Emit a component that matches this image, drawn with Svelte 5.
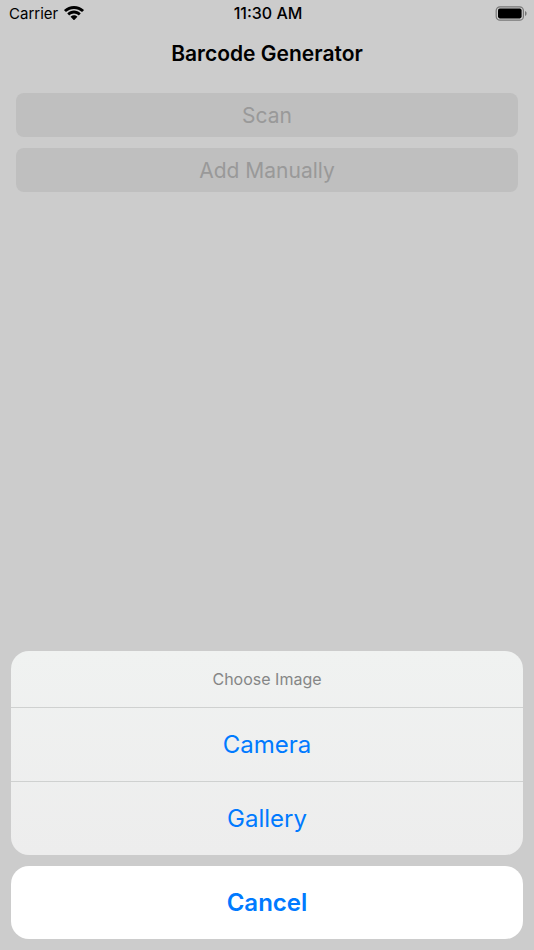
<script lang="ts">
  const pageActions = ['Scan', 'Add Manually'];
  const sources = ['Camera', 'Gallery'];
</script>

<div class="screen">
  <header class="status">
    <div class="carrier">
      <span>Carrier</span>
      <svg class="wifi" viewBox="0 0 20 14" aria-hidden="true">
        <path d="M10 0C6.200 0 2.800 1.400.3 3.800c-.2.200-.2.400 0 .6l1.400 1.400c.2.200.4.200.6 0C4.300 3.900 7 2.900 10 2.900s5.700 1 7.700 2.900c.2.200.4.200.6 0l1.400-1.400c.2-.2.200-.4 0-.6C17.200 1.400 13.800 0 10 0z" />
        <path d="M10 4.600c-2.500 0-4.800 1-6.500 2.600-.2.200-.2.400 0 .6l1.500 1.500c.2.200.4.200.6 0C6.800 8.200 8.300 7.500 10 7.500s3.200.7 4.400 1.800c.2.200.4.200.6 0l1.500-1.500c.2-.2.200-.4 0-.6C14.800 5.600 12.500 4.600 10 4.600z" />
        <path d="M10 9.200c-1.200 0-2.300.5-3.200 1.300-.2.200-.2.400 0 .6l2.900 2.800c.2.200.4.200.6 0l2.900-2.800c.2-.2.200-.4 0-.6-.9-.8-2-1.300-3.200-1.300z" />
      </svg>
    </div>
    <time>11:30 AM</time>
    <svg class="battery" viewBox="0 0 32 15" aria-hidden="true">
      <rect class="shell" x="1.200" y=".8" width="27.200" height="13.400" rx="3.800" />
      <rect x="3" y="2.600" width="23.600" height="9.800" rx="1.800" />
      <path class="cap" d="M30 5.100v4.800c1-.4 1.600-1.300 1.600-2.400s-.6-2-1.600-2.400z" />
    </svg>
  </header>

  <h1>Barcode Generator</h1>

  <main>
    {#each pageActions as action}
      <button class="page-button" disabled>{action}</button>
    {/each}
  </main>

  <div class="sheet" role="dialog" aria-labelledby="sheet-title">
    <div class="group">
      <h2 id="sheet-title">Choose Image</h2>
      {#each sources as source}
        <button class="option">{source}</button>
      {/each}
    </div>
    <button class="option cancel">Cancel</button>
  </div>
</div>

<style>
  :global(body) {
    background: #cccccc;
  }

  .screen {
    display: flex;
    flex-direction: column;
    min-height: 100vh;
    background: #cccccc;
    color: #000;
    font-family: Inter, "Liberation Sans", sans-serif;
  }

  .status {
    display: grid;
    grid-template-columns: 1fr auto 1fr;
    align-items: center;
    height: 26px;
    padding: 0 7px 0 9px;
    font-size: 15px;
  }

  .carrier {
    display: flex;
    align-items: center;
    gap: 6px;
  }

  .wifi {
    width: 20px;
    height: 14px;
  }

  time {
    font-size: 16px;
    font-weight: 500;
  }

  .battery {
    justify-self: end;
    width: 32px;
    height: 15px;
  }

  .shell {
    fill: none;
    stroke: #777;
    stroke-width: 1.2;
  }

  .cap {
    fill: #777;
  }

  h1 {
    margin: 0;
    font-size: 21px;
    font-weight: 600;
    line-height: 56px;
    text-align: center;
  }

  main {
    display: flex;
    flex: 1;
    flex-direction: column;
    gap: 11px;
    padding: 11px 16px;
  }

  button {
    border: 0;
    padding: 0;
    font-family: inherit;
    text-align: center;
  }

  .page-button {
    height: 44px;
    border-radius: 8px;
    background: #bfbfbf;
    color: #999;
    font-size: 21px;
  }

  .sheet {
    display: flex;
    flex-direction: column;
    gap: 11px;
    padding: 0 11px 11px;
  }

  .group {
    display: flex;
    flex-direction: column;
    overflow: hidden;
    border-radius: 18px;
    background: linear-gradient(#f0f2f1, #ededed);
  }

  h2 {
    margin: 0;
    color: #858686;
    font-size: 16px;
    font-weight: 400;
    line-height: 56px;
    text-align: center;
  }

  .option {
    height: 74px;
    border-top: 1px solid #cfd1d0;
    background: transparent;
    color: #007aff;
    font-size: 24px;
    cursor: pointer;
  }

  .cancel {
    height: 73px;
    border-top: 0;
    border-radius: 18px;
    background: #fff;
    font-weight: 600;
  }
</style>
